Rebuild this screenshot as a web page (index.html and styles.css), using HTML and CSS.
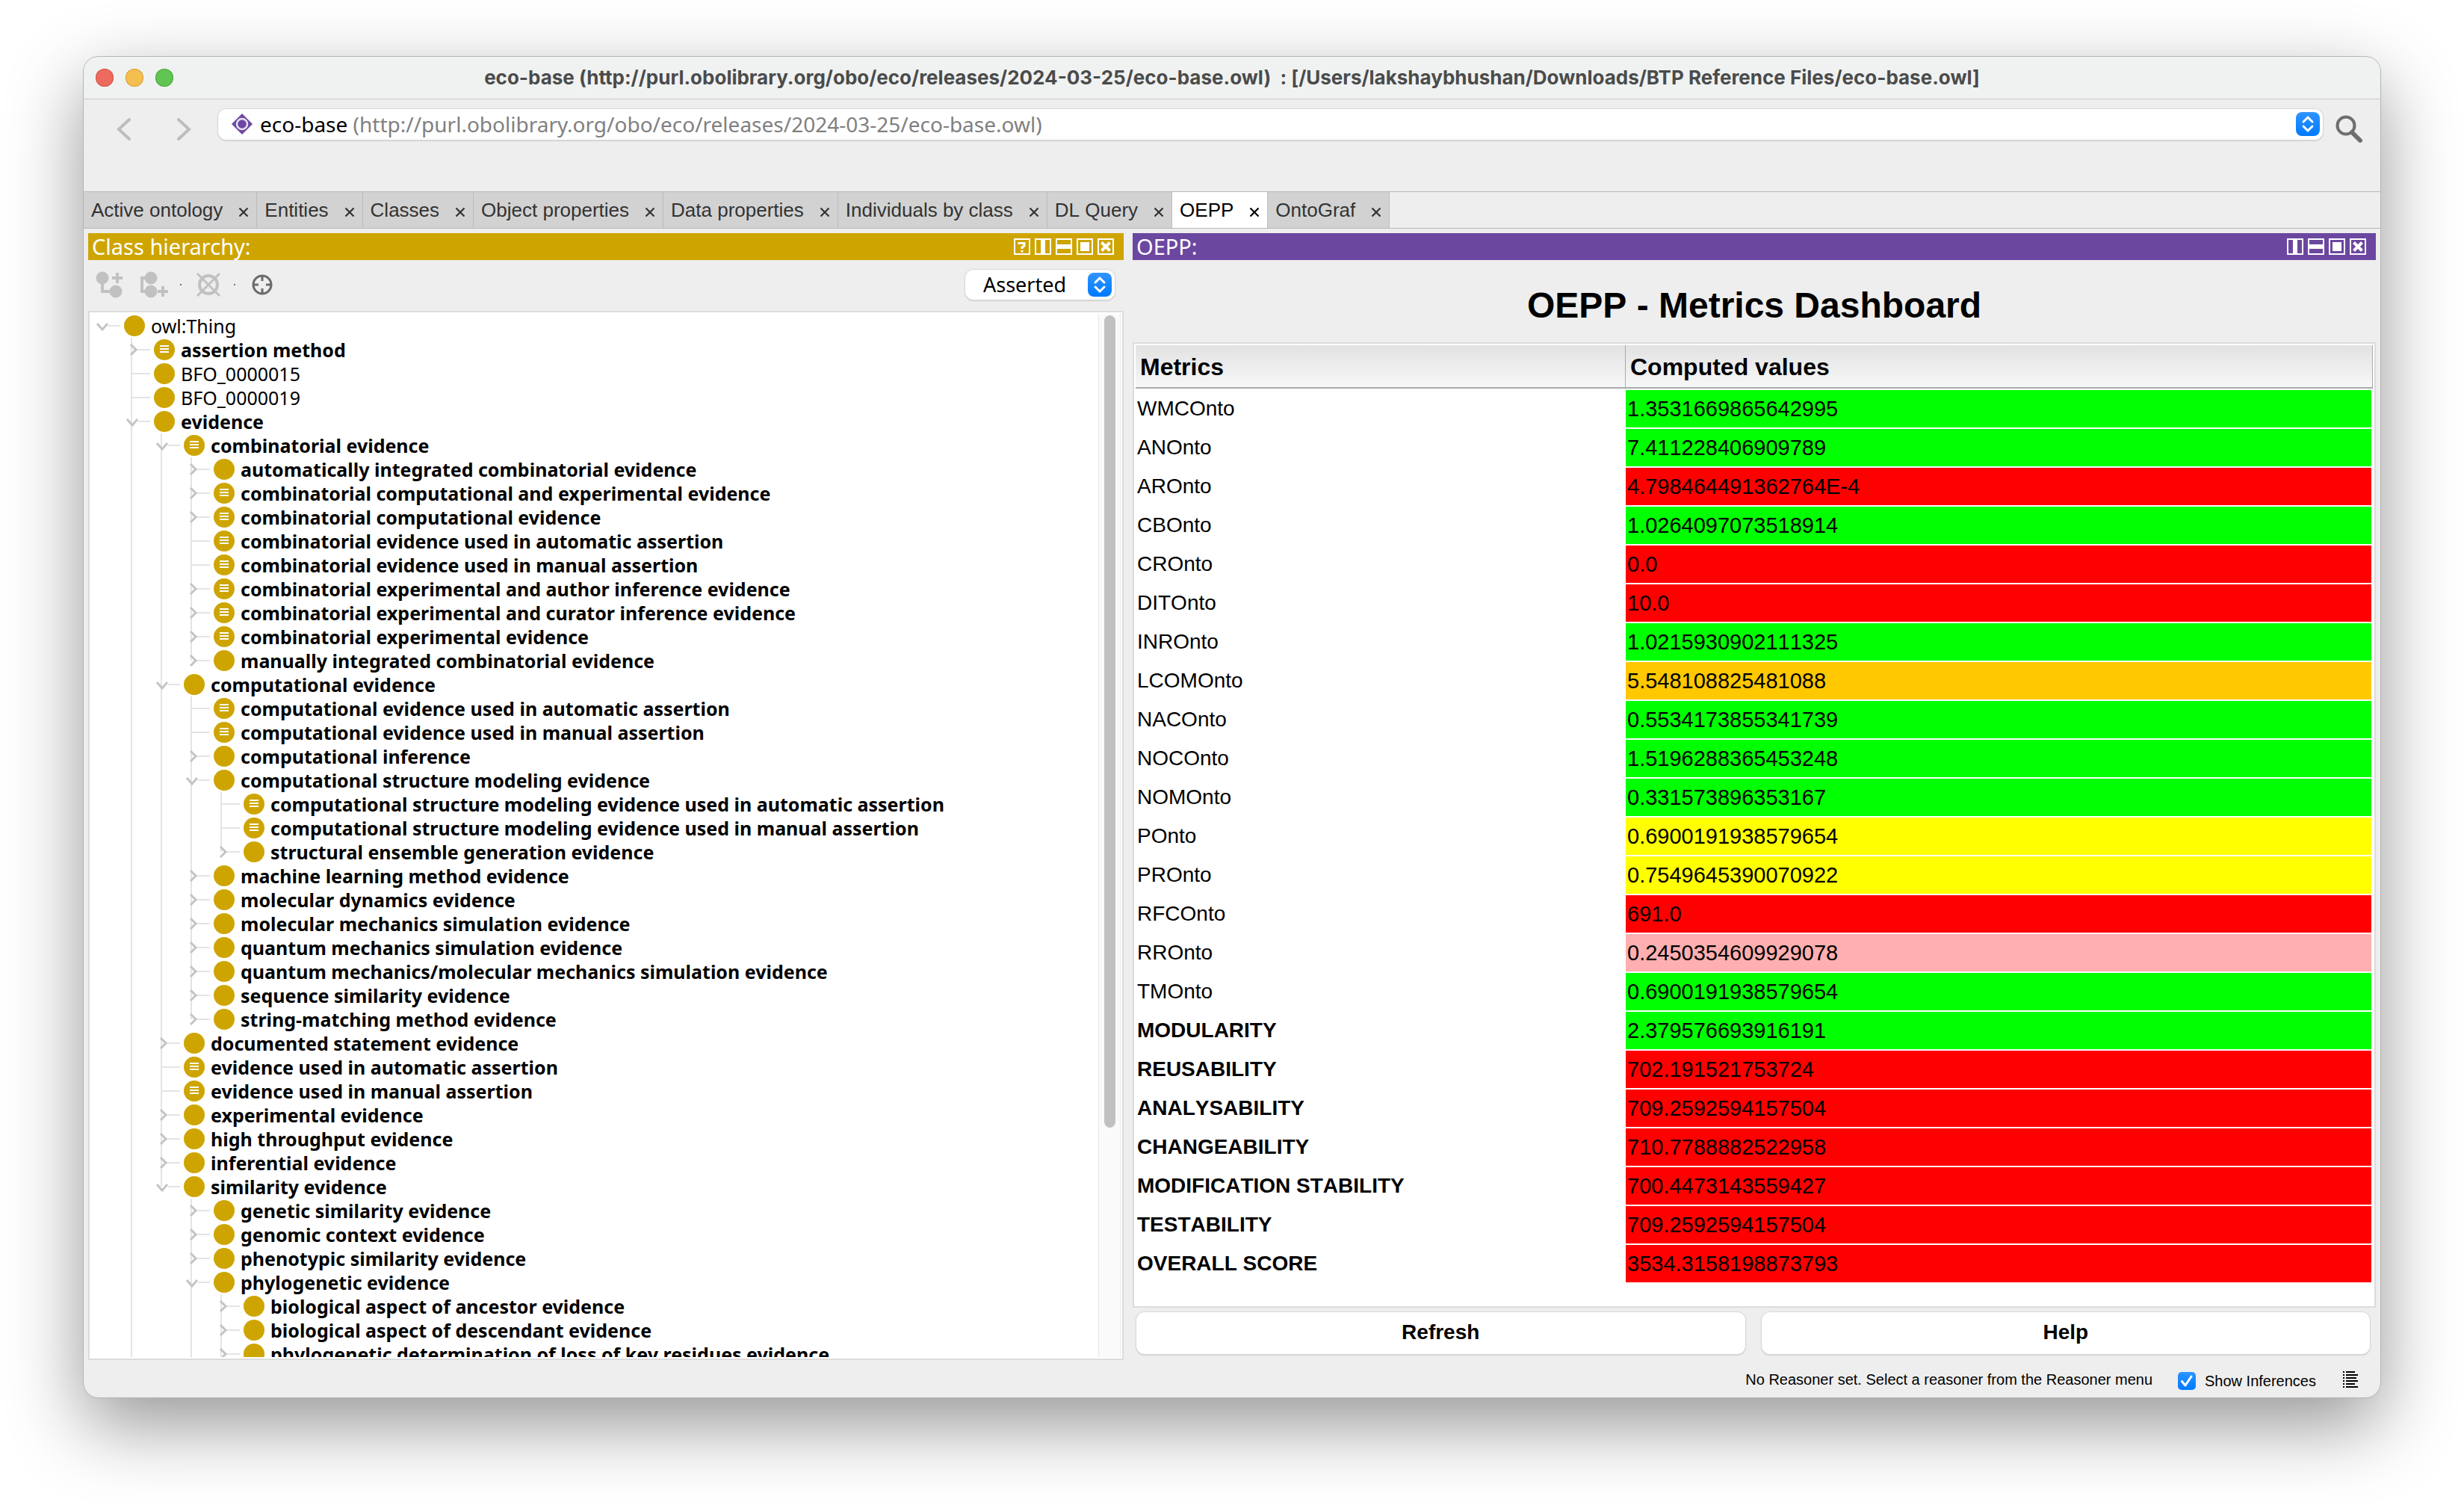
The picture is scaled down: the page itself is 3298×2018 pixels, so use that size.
FILE: index.html
```html
<!DOCTYPE html>
<html lang="en">
<head>
<meta charset="utf-8">
<title>eco-base - Protégé</title>
<link rel="stylesheet" href="styles.css">
</head>
<body>
<svg class="defs" aria-hidden="true">
  <symbol id="open" viewBox="0 0 46 32"><path d="M25 16H41" stroke="#e4e4e4" stroke-width="2"/><path d="M10 13l7 8 7-8" fill="none" stroke="#c4c4c4" stroke-width="3"/></symbol>
  <symbol id="shut" viewBox="0 0 46 32"><path d="M23 16H41" stroke="#e4e4e4" stroke-width="2"/><path d="M15 9l7 7-7 7" fill="none" stroke="#c4c4c4" stroke-width="3"/></symbol>
  <symbol id="leaf" viewBox="0 0 46 32"><path d="M16 16H41" stroke="#e4e4e4" stroke-width="2"/></symbol>
  <symbol id="cls" viewBox="0 0 28 28"><circle cx="14" cy="14" r="14" fill="#cea500"/></symbol>
  <symbol id="eq" viewBox="0 0 28 28"><circle cx="14" cy="14" r="14" fill="#cea500"/><path d="M8 9H20M8 13H20M8 17H20" stroke="#fff" stroke-width="2"/></symbol>
  <symbol id="i-help" viewBox="0 0 22 22"><rect x="1" y="1" width="20" height="20"/><path d="M7 8V6.500H14V10L11 12V14M11 16V18.500" stroke-width="3"/></symbol>
  <symbol id="i-vert" viewBox="0 0 22 22"><rect x="1" y="1" width="20" height="20"/><path d="M11 2V20" stroke-width="6"/></symbol>
  <symbol id="i-horz" viewBox="0 0 22 22"><rect x="1" y="1" width="20" height="20"/><path d="M2 11H20" stroke-width="6"/></symbol>
  <symbol id="i-float" viewBox="0 0 22 22"><rect x="1" y="1" width="20" height="20"/><path d="M5 11H17" stroke-width="12"/></symbol>
  <symbol id="i-close" viewBox="0 0 22 22"><rect x="1" y="1" width="20" height="20"/><path d="M5.500 5.500L16.500 16.500M16.500 5.500L5.500 16.500" stroke-width="4"/></symbol>
  <symbol id="i-x" viewBox="0 0 14 14"><path d="M1.500 1.500L12.500 12.500M12.500 1.500L1.500 12.500" stroke="currentColor" stroke-width="2.200"/></symbol>
</svg>

<main class="window">
  <header class="titlebar">
    <div class="lights"><button class="light red" aria-label="Close"></button><button class="light amber" aria-label="Minimize"></button><button class="light green" aria-label="Zoom"></button></div>
    <h1 class="title">eco-base (http://purl.obolibrary.org/obo/eco/releases/2024-03-25/eco-base.owl)  : [/Users/lakshaybhushan/Downloads/BTP Reference Files/eco-base.owl]</h1>
  </header>

  <div class="toolbar">
    <button class="nav" aria-label="Back"><svg width="20" height="30" viewBox="0 0 20 30"><path d="M17 2L3 15 17 28"/></svg></button>
    <button class="nav" aria-label="Forward"><svg width="20" height="30" viewBox="0 0 20 30"><path d="M3 2L17 15 3 28"/></svg></button>
    <button class="ontology" aria-haspopup="listbox">
      <svg width="28" height="28" viewBox="0 0 28 28"><path d="M14 0L28 14 14 28 0 14Z" fill="#6d48a0"/><circle cx="14" cy="14" r="7" fill="none" stroke="#e9e2f2" stroke-width="2.500"/></svg>
      <span class="ontology-name">eco-base <span class="ontology-iri">(http://purl.obolibrary.org/obo/eco/releases/2024-03-25/eco-base.owl)</span></span>
      <svg class="stepper" width="32" height="32" viewBox="0 0 32 32"><path d="M10 13l6-6 6 6M10 19l6 6 6-6"/></svg>
    </button>
    <button class="search" aria-label="Search"><svg width="38" height="38" viewBox="0 0 38 38"><circle cx="15" cy="14" r="11.500" fill="none" stroke="#6e6e6e" stroke-width="4"/><path d="M23 23L34 34" stroke="#6e6e6e" stroke-width="6" stroke-linecap="round"/></svg></button>
  </div>

  <nav class="tabs">
    <button class="tab">Active ontology <svg><use href="#i-x"/></svg></button>
    <button class="tab">Entities <svg><use href="#i-x"/></svg></button>
    <button class="tab">Classes <svg><use href="#i-x"/></svg></button>
    <button class="tab">Object properties <svg><use href="#i-x"/></svg></button>
    <button class="tab">Data properties <svg><use href="#i-x"/></svg></button>
    <button class="tab">Individuals by class <svg><use href="#i-x"/></svg></button>
    <button class="tab">DL Query <svg><use href="#i-x"/></svg></button>
    <button class="tab active">OEPP <svg><use href="#i-x"/></svg></button>
    <button class="tab">OntoGraf <svg><use href="#i-x"/></svg></button>
  </nav>

  <div class="panels">
    <section class="panel">
      <div class="panel-head gold">
        <h2>Class hierarchy:</h2>
        <button aria-label="Help"><svg><use href="#i-help"/></svg></button>
        <button aria-label="Split vertically"><svg><use href="#i-vert"/></svg></button>
        <button aria-label="Split horizontally"><svg><use href="#i-horz"/></svg></button>
        <button aria-label="Float"><svg><use href="#i-float"/></svg></button>
        <button aria-label="Close"><svg><use href="#i-close"/></svg></button>
      </div>
      <div class="tree-tools">
        <button aria-label="Add subclass"><svg width="38" height="36" viewBox="0 0 38 36" fill="#c1c1c1" stroke="#c1c1c1"><circle cx="9" cy="9" r="8"/><circle cx="27" cy="27" r="8"/><path d="M9 9V27H27" fill="none" stroke-width="4"/><path d="M29 2V16M22 9H36" stroke-width="4"/></svg></button>
        <button aria-label="Add sibling class"><svg width="38" height="36" viewBox="0 0 38 36" fill="#c1c1c1" stroke="#c1c1c1"><circle cx="14" cy="9" r="8"/><circle cx="14" cy="27" r="8"/><path d="M14 9H2V27H14" fill="none" stroke-width="4"/><path d="M30 20V34M23 27H37" stroke-width="4"/></svg></button>
        <span class="dot"></span>
        <button aria-label="Delete class"><svg width="32" height="32" viewBox="0 0 32 32" fill="none" stroke="#c1c1c1"><circle cx="16" cy="16" r="12" stroke-width="4"/><path d="M1 1L31 31M31 1L1 31" stroke-width="3"/></svg></button>
        <span class="dot"></span>
        <button aria-label="Locate class"><svg width="28" height="28" viewBox="0 0 28 28" fill="none" stroke="#6b6b6b"><circle cx="14" cy="14" r="12" stroke-width="3"/><path d="M14 3V9M14 19V25M3 14H9M19 14H25" stroke-width="3"/></svg></button>
        <select class="mode" aria-label="Hierarchy mode"><option>Asserted</option><option>Inferred</option></select>
      </div>
      <div class="tree-box">
        <div class="tree-view">
          <ul class="tree" id="tree"><li class="root"><div class="row plain"><button><svg class="twig"><use href="#open"/></svg></button><svg class="node"><use href="#cls"/></svg>owl:Thing</div>
<ul>
<li><div class="row"><button><svg class="twig"><use href="#shut"/></svg></button><svg class="node"><use href="#eq"/></svg>assertion method</div></li>
<li><div class="row plain"><svg class="twig"><use href="#leaf"/></svg><svg class="node"><use href="#cls"/></svg>BFO_0000015</div></li>
<li><div class="row plain"><svg class="twig"><use href="#leaf"/></svg><svg class="node"><use href="#cls"/></svg>BFO_0000019</div></li>
<li><div class="row"><button><svg class="twig"><use href="#open"/></svg></button><svg class="node"><use href="#cls"/></svg>evidence</div>
<ul>
<li><div class="row"><button><svg class="twig"><use href="#open"/></svg></button><svg class="node"><use href="#eq"/></svg>combinatorial evidence</div>
<ul>
<li><div class="row"><button><svg class="twig"><use href="#shut"/></svg></button><svg class="node"><use href="#cls"/></svg>automatically integrated combinatorial evidence</div></li>
<li><div class="row"><button><svg class="twig"><use href="#shut"/></svg></button><svg class="node"><use href="#eq"/></svg>combinatorial computational and experimental evidence</div></li>
<li><div class="row"><button><svg class="twig"><use href="#shut"/></svg></button><svg class="node"><use href="#eq"/></svg>combinatorial computational evidence</div></li>
<li><div class="row"><svg class="twig"><use href="#leaf"/></svg><svg class="node"><use href="#eq"/></svg>combinatorial evidence used in automatic assertion</div></li>
<li><div class="row"><svg class="twig"><use href="#leaf"/></svg><svg class="node"><use href="#eq"/></svg>combinatorial evidence used in manual assertion</div></li>
<li><div class="row"><button><svg class="twig"><use href="#shut"/></svg></button><svg class="node"><use href="#eq"/></svg>combinatorial experimental and author inference evidence</div></li>
<li><div class="row"><button><svg class="twig"><use href="#shut"/></svg></button><svg class="node"><use href="#eq"/></svg>combinatorial experimental and curator inference evidence</div></li>
<li><div class="row"><button><svg class="twig"><use href="#shut"/></svg></button><svg class="node"><use href="#eq"/></svg>combinatorial experimental evidence</div></li>
<li class="last"><div class="row"><button><svg class="twig"><use href="#shut"/></svg></button><svg class="node"><use href="#cls"/></svg>manually integrated combinatorial evidence</div></li>
</ul></li>
<li><div class="row"><button><svg class="twig"><use href="#open"/></svg></button><svg class="node"><use href="#cls"/></svg>computational evidence</div>
<ul>
<li><div class="row"><svg class="twig"><use href="#leaf"/></svg><svg class="node"><use href="#eq"/></svg>computational evidence used in automatic assertion</div></li>
<li><div class="row"><svg class="twig"><use href="#leaf"/></svg><svg class="node"><use href="#eq"/></svg>computational evidence used in manual assertion</div></li>
<li><div class="row"><button><svg class="twig"><use href="#shut"/></svg></button><svg class="node"><use href="#cls"/></svg>computational inference</div></li>
<li><div class="row"><button><svg class="twig"><use href="#open"/></svg></button><svg class="node"><use href="#cls"/></svg>computational structure modeling evidence</div>
<ul>
<li><div class="row"><svg class="twig"><use href="#leaf"/></svg><svg class="node"><use href="#eq"/></svg>computational structure modeling evidence used in automatic assertion</div></li>
<li><div class="row"><svg class="twig"><use href="#leaf"/></svg><svg class="node"><use href="#eq"/></svg>computational structure modeling evidence used in manual assertion</div></li>
<li class="last"><div class="row"><button><svg class="twig"><use href="#shut"/></svg></button><svg class="node"><use href="#cls"/></svg>structural ensemble generation evidence</div></li>
</ul></li>
<li><div class="row"><button><svg class="twig"><use href="#shut"/></svg></button><svg class="node"><use href="#cls"/></svg>machine learning method evidence</div></li>
<li><div class="row"><button><svg class="twig"><use href="#shut"/></svg></button><svg class="node"><use href="#cls"/></svg>molecular dynamics evidence</div></li>
<li><div class="row"><button><svg class="twig"><use href="#shut"/></svg></button><svg class="node"><use href="#cls"/></svg>molecular mechanics simulation evidence</div></li>
<li><div class="row"><button><svg class="twig"><use href="#shut"/></svg></button><svg class="node"><use href="#cls"/></svg>quantum mechanics simulation evidence</div></li>
<li><div class="row"><button><svg class="twig"><use href="#shut"/></svg></button><svg class="node"><use href="#cls"/></svg>quantum mechanics/molecular mechanics simulation evidence</div></li>
<li><div class="row"><button><svg class="twig"><use href="#shut"/></svg></button><svg class="node"><use href="#cls"/></svg>sequence similarity evidence</div></li>
<li class="last"><div class="row"><button><svg class="twig"><use href="#shut"/></svg></button><svg class="node"><use href="#cls"/></svg>string-matching method evidence</div></li>
</ul></li>
<li><div class="row"><button><svg class="twig"><use href="#shut"/></svg></button><svg class="node"><use href="#cls"/></svg>documented statement evidence</div></li>
<li><div class="row"><svg class="twig"><use href="#leaf"/></svg><svg class="node"><use href="#eq"/></svg>evidence used in automatic assertion</div></li>
<li><div class="row"><svg class="twig"><use href="#leaf"/></svg><svg class="node"><use href="#eq"/></svg>evidence used in manual assertion</div></li>
<li><div class="row"><button><svg class="twig"><use href="#shut"/></svg></button><svg class="node"><use href="#cls"/></svg>experimental evidence</div></li>
<li><div class="row"><button><svg class="twig"><use href="#shut"/></svg></button><svg class="node"><use href="#cls"/></svg>high throughput evidence</div></li>
<li><div class="row"><button><svg class="twig"><use href="#shut"/></svg></button><svg class="node"><use href="#cls"/></svg>inferential evidence</div></li>
<li class="last"><div class="row"><button><svg class="twig"><use href="#open"/></svg></button><svg class="node"><use href="#cls"/></svg>similarity evidence</div>
<ul>
<li><div class="row"><button><svg class="twig"><use href="#shut"/></svg></button><svg class="node"><use href="#cls"/></svg>genetic similarity evidence</div></li>
<li><div class="row"><button><svg class="twig"><use href="#shut"/></svg></button><svg class="node"><use href="#cls"/></svg>genomic context evidence</div></li>
<li><div class="row"><button><svg class="twig"><use href="#shut"/></svg></button><svg class="node"><use href="#cls"/></svg>phenotypic similarity evidence</div></li>
<li><div class="row"><button><svg class="twig"><use href="#open"/></svg></button><svg class="node"><use href="#cls"/></svg>phylogenetic evidence</div>
<ul>
<li><div class="row"><button><svg class="twig"><use href="#shut"/></svg></button><svg class="node"><use href="#cls"/></svg>biological aspect of ancestor evidence</div></li>
<li><div class="row"><button><svg class="twig"><use href="#shut"/></svg></button><svg class="node"><use href="#cls"/></svg>biological aspect of descendant evidence</div></li>
<li><div class="row"><button><svg class="twig"><use href="#shut"/></svg></button><svg class="node"><use href="#cls"/></svg>phylogenetic determination of loss of key residues evidence</div></li>
</ul></li>
</ul></li>
</ul></li>
</ul></li></ul>
        </div>
        <div class="track"><div class="thumb"></div></div>
      </div>
    </section>

    <section class="panel">
      <div class="panel-head purple">
        <h2>OEPP:</h2>
        <button aria-label="Split vertically"><svg><use href="#i-vert"/></svg></button>
        <button aria-label="Split horizontally"><svg><use href="#i-horz"/></svg></button>
        <button aria-label="Float"><svg><use href="#i-float"/></svg></button>
        <button aria-label="Close"><svg><use href="#i-close"/></svg></button>
      </div>
      <h2 class="dash-title">OEPP - Metrics Dashboard</h2>
      <div class="metrics-box">
        <table class="metrics">
          <thead><tr><th scope="col">Metrics</th><th scope="col">Computed values</th></tr></thead>
          <tbody>
            <tr><td>WMCOnto</td><td class="good">1.3531669865642995</td></tr>
            <tr><td>ANOnto</td><td class="good">7.411228406909789</td></tr>
            <tr><td>AROnto</td><td class="bad">4.798464491362764E-4</td></tr>
            <tr><td>CBOnto</td><td class="good">1.0264097073518914</td></tr>
            <tr><td>CROnto</td><td class="bad">0.0</td></tr>
            <tr><td>DITOnto</td><td class="bad">10.0</td></tr>
            <tr><td>INROnto</td><td class="good">1.0215930902111325</td></tr>
            <tr><td>LCOMOnto</td><td class="fair">5.548108825481088</td></tr>
            <tr><td>NACOnto</td><td class="good">0.5534173855341739</td></tr>
            <tr><td>NOCOnto</td><td class="good">1.5196288365453248</td></tr>
            <tr><td>NOMOnto</td><td class="good">0.331573896353167</td></tr>
            <tr><td>POnto</td><td class="okay">0.6900191938579654</td></tr>
            <tr><td>PROnto</td><td class="okay">0.7549645390070922</td></tr>
            <tr><td>RFCOnto</td><td class="bad">691.0</td></tr>
            <tr><td>RROnto</td><td class="poor">0.2450354609929078</td></tr>
            <tr><td>TMOnto</td><td class="good">0.6900191938579654</td></tr>
            <tr class="sum"><td>MODULARITY</td><td class="good">2.379576693916191</td></tr>
            <tr class="sum"><td>REUSABILITY</td><td class="bad">702.191521753724</td></tr>
            <tr class="sum"><td>ANALYSABILITY</td><td class="bad">709.2592594157504</td></tr>
            <tr class="sum"><td>CHANGEABILITY</td><td class="bad">710.7788882522958</td></tr>
            <tr class="sum"><td>MODIFICATION STABILITY</td><td class="bad">700.4473143559427</td></tr>
            <tr class="sum"><td>TESTABILITY</td><td class="bad">709.2592594157504</td></tr>
            <tr class="sum"><td>OVERALL SCORE</td><td class="bad">3534.3158198873793</td></tr>
          </tbody>
        </table>
      </div>
      <div class="actions"><button>Refresh</button><button>Help</button></div>
    </section>
  </div>

  <footer class="status">
    <span>No Reasoner set. Select a reasoner from the Reasoner menu</span>
    <label><input type="checkbox" checked>Show Inferences</label>
    <button aria-label="Show log"><svg width="20" height="22" viewBox="0 0 20 22" stroke="#000" stroke-width="2"><path d="M0 1H2M4 1H16M0 5H2M4 5H20M0 9H2M4 9H18M0 13H2M4 13H20M0 17H2M4 17H16M0 21H2M4 21H20"/></svg></button>
  </footer>
</main>
</body>
</html>
```
FILE: styles.css
```css
* { box-sizing: border-box; }
body {
  margin: 0;
  height: 100vh;
  padding: 76px 112px 148px;
  display: flex;
  background: #fff;
  color: #000;
  font-family: "Liberation Sans", Arial, sans-serif;
  font-kerning: none;
}
button, select { font: inherit; font-kerning: none; color: inherit; border: 0; padding: 0; background: none; }
h1, h2, ul { margin: 0; padding: 0; }
svg { display: block; flex: none; }
.defs { position: absolute; width: 0; height: 0; }

.window {
  flex: 1;
  min-width: 0;
  display: flex;
  flex-direction: column;
  background: #eee;
  border-radius: 20px;
  overflow: hidden;
  box-shadow: 0 0 0 1px #b4b4b4, 0 36px 100px rgba(0, 0, 0, .42);
}

.titlebar {
  height: 57px;
  flex: none;
  display: grid;
  grid-template-columns: 1fr auto 1fr;
  align-items: center;
  padding: 0 16px;
  background: #f0f2f1;
  border-bottom: 1px solid #c8c8c8;
}
.lights { display: flex; gap: 16px; }
.light { width: 24px; height: 24px; border-radius: 50%; }
.red { background: #ed6a5e; box-shadow: inset 0 0 0 1px #d55448; }
.amber { background: #f5bf4f; box-shadow: inset 0 0 0 1px #d8a03c; }
.green { background: #61c554; box-shadow: inset 0 0 0 1px #4fa73f; }
.title { font: bold 26px/32px Inter, sans-serif; color: #4a4b4b; white-space: pre; }

.toolbar {
  height: 123px;
  flex: none;
  display: flex;
  align-items: flex-start;
  padding: 13px 23px 0 44px;
}
.nav { width: 80px; margin-top: 12px; }
.nav svg { fill: none; stroke: #bdbdbd; stroke-width: 4; stroke-linecap: round; }
.nav + .nav { width: 56px; }
.ontology {
  flex: 1;
  height: 41px;
  display: flex;
  align-items: center;
  gap: 10px;
  padding: 0 4px 2px 18px;
  background: #fff;
  border-radius: 11px;
  box-shadow: 0 0 1px 1px #d9d9d9, 0 1px 2px #999;
  text-align: left;
}
.ontology-name { flex: 1; font: 28px/40px "Noto Sans", sans-serif; }
.ontology-iri { color: #808080; }
.stepper {
  fill: none;
  stroke: #fff;
  stroke-width: 3;
  stroke-linecap: round;
  border-radius: 8px;
  background: linear-gradient(#2f94ff, #007aff);
}
.search { margin: 8px 0 0 16px; }

.tabs {
  height: 50px;
  flex: none;
  display: flex;
  border-top: 1px solid #b9b9b9;
  border-bottom: 1px solid #b9b9b9;
}
.tab {
  display: flex;
  align-items: center;
  gap: 21px;
  padding: 0 10px;
  font-size: 26px;
  line-height: 32px;
  color: #323232;
  background: #d2d2d2;
  border-right: 1px solid #bcbcbc;
}
.tab svg { width: 14px; height: 14px; margin-top: 6px; }
.tab.active { background: #fff; color: #000; }

.panels {
  flex: 1;
  min-height: 0;
  display: grid;
  grid-template-columns: 1386fr 1664fr;
  grid-template-rows: 100%;
  gap: 12px;
  padding: 6px 6px 0;
}
.panel { min-width: 0; display: flex; flex-direction: column; }
.panel-head {
  height: 36px;
  flex: none;
  display: flex;
  align-items: center;
  gap: 6px;
  padding: 0 13px 0 5px;
  color: #fff;
}
.panel-head h2 { flex: 1; font: 29px/36px "Noto Sans", sans-serif; }
.panel-head svg { width: 22px; height: 22px; fill: none; stroke: #fff; stroke-width: 2; }
.gold { background: #cea500; }
.purple { background: #6c479f; }

.tree-tools {
  height: 68px;
  flex: none;
  display: flex;
  align-items: center;
  padding: 0 12px 2px 10px;
}
.tree-tools button + button { margin-left: 22px; }
.dot { width: 2px; height: 2px; margin: 0 20px 0 15px; background: #777; }
.dot + button + .dot { margin-left: 18px; margin-right: 22px; }
.mode {
  width: 200px;
  height: 40px;
  margin-left: auto;
  padding: 0 24px;
  appearance: none;
  font: 27px/40px "Noto Sans", sans-serif;
  border-radius: 11px;
  background: #fff url("data:image/svg+xml,%3Csvg xmlns='http://www.w3.org/2000/svg' width='32' height='32'%3E%3ClinearGradient id='g' x2='0' y2='1'%3E%3Cstop stop-color='%232f94ff'/%3E%3Cstop offset='1' stop-color='%23007aff'/%3E%3C/linearGradient%3E%3Crect width='32' height='32' rx='8' fill='url(%23g)'/%3E%3Cpath d='M10 13l6-6 6 6M10 19l6 6 6-6' fill='none' stroke='white' stroke-width='3' stroke-linecap='round'/%3E%3C/svg%3E") no-repeat right 4px center;
  box-shadow: 0 0 1px 1px #d9d9d9, 0 1px 2px #999;
}
.tree-box {
  flex: 1;
  min-height: 0;
  display: flex;
  padding: 2px 2px 2px 0;
  background: #fff;
  border: 2px solid #dcdcdc;
}
.tree-view { flex: 1; min-width: 0; overflow: hidden; }
.tree, .tree ul { list-style: none; }
.tree ul { padding-left: 40px; }
.tree li {
  background: linear-gradient(#e4e4e4, #e4e4e4) no-repeat 15px 0 / 2px 100%;
}
.tree li.root { background: none; }
.tree li.last { background-size: 2px 16px; }
.row {
  height: 32px;
  display: flex;
  align-items: center;
  font: bold 25px/32px "Noto Sans", sans-serif;
  white-space: nowrap;
}
.row.plain { font-weight: normal; }
.twig { width: 46px; height: 32px; }
.node { width: 28px; height: 28px; margin-right: 8px; }
.track {
  width: 30px;
  padding: 2px 6px 0 7px;
  background: #fafafa;
  border: solid #e8e8e8;
  border-width: 0 1px;
}
.thumb { height: 78%; border-radius: 8px; background: #c1c1c1; }

.dash-title {
  flex: none;
  height: 110px;
  font-size: 48px;
  line-height: 122px;
  text-align: center;
}
.metrics-box {
  flex: 1;
  min-height: 0;
  padding: 2px 2px 0;
  background: #fff;
  border: 2px solid #dcdcdc;
}
.metrics { width: 100%; table-layout: fixed; border-spacing: 0; }
.metrics th {
  height: 60px;
  padding: 0 6px;
  font-size: 32px;
  text-align: left;
  background: linear-gradient(#e2e2e2, #f8f8f8);
  background-clip: padding-box;
  border-right: 1px solid #aaa;
  border-bottom: 2px solid #fff;
  box-shadow: inset 0 -2px #aaa;
}
.metrics th:first-child { width: calc(100% * 656 / 1656); }
.metrics td {
  height: 52px;
  padding: 0 2px;
  font-size: 28px;
  line-height: 32px;
  border-bottom: 2px solid #fff;
}
.metrics td + td { font-size: 29px; border-right: 2px solid #fff; }
.metrics .sum td:first-child { font-weight: bold; }
.good { background: #0f0; }
.bad { background: #f00; }
.fair { background: #ffc800; }
.okay { background: #ff0; }
.poor { background: #ffafaf; }

.actions {
  flex: none;
  display: flex;
  gap: 22px;
  padding: 6px 8px 8px 5px;
}
.actions button {
  flex: 1;
  height: 56px;
  padding-bottom: 2px;
  font-size: 28px;
  font-weight: bold;
  background: #fff;
  border-radius: 11px;
  box-shadow: 0 0 1px 1px #d9d9d9, 0 1px 2px #999;
}

.status {
  height: 50px;
  flex: none;
  display: flex;
  align-items: center;
  justify-content: flex-end;
  padding: 2px 30px 0 0;
  font-size: 20px;
  line-height: 24px;
}
.status label { display: flex; align-items: center; gap: 12px; margin: 4px 36px 0 34px; }
.status input {
  appearance: none;
  width: 24px;
  height: 24px;
  margin: 0;
  border-radius: 5px;
  background: url("data:image/svg+xml,%3Csvg xmlns='http://www.w3.org/2000/svg' width='24' height='24'%3E%3Cpath d='M5.500 12.500l4.500 5.500 8-12' fill='none' stroke='white' stroke-width='3' stroke-linecap='round' stroke-linejoin='round'/%3E%3C/svg%3E"), linear-gradient(#2f94ff, #007aff);
}
```
